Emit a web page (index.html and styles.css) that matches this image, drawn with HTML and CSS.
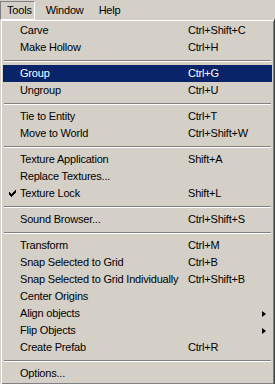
FILE: index.html
```html
<!DOCTYPE html>
<html lang="en">
<head>
    <meta charset="UTF-8">
    <title>Tools menu</title>
    <link rel="stylesheet" href="styles.css">
</head>
<body>
    <div class="menubar">
        <span class="top-item pressed">Tools</span>
        <span class="top-item">Window</span>
        <span class="top-item">Help</span>
    </div>

    <div class="menu">
        <div class="row"><span class="check"></span><span class="label">Carve</span><span class="key">Ctrl+Shift+C</span></div>
        <div class="row"><span class="check"></span><span class="label">Make Hollow</span><span class="key">Ctrl+H</span></div>
        <div class="sep"></div>
        <div class="row active"><span class="check"></span><span class="label">Group</span><span class="key">Ctrl+G</span></div>
        <div class="row"><span class="check"></span><span class="label">Ungroup</span><span class="key">Ctrl+U</span></div>
        <div class="sep"></div>
        <div class="row"><span class="check"></span><span class="label">Tie to Entity</span><span class="key">Ctrl+T</span></div>
        <div class="row"><span class="check"></span><span class="label">Move to World</span><span class="key">Ctrl+Shift+W</span></div>
        <div class="sep"></div>
        <div class="row"><span class="check"></span><span class="label">Texture Application</span><span class="key">Shift+A</span></div>
        <div class="row"><span class="check"></span><span class="label">Replace Textures...</span><span class="key"></span></div>
        <div class="row">
            <span class="check">
                <svg width="7" height="7" viewBox="0 0 7 7"><path d="M0 2h1v1h1v1h1v-1h1v-1h1v-1h1v-1h1v3h-1v1h-1v1h-1v1h-1v1h-1v-1h-1v-1h-1v-1h-1z" fill="#000"/></svg>
            </span><span class="label">Texture Lock</span><span class="key">Shift+L</span>
        </div>
        <div class="sep"></div>
        <div class="row"><span class="check"></span><span class="label">Sound Browser...</span><span class="key">Ctrl+Shift+S</span></div>
        <div class="sep"></div>
        <div class="row"><span class="check"></span><span class="label">Transform</span><span class="key">Ctrl+M</span></div>
        <div class="row"><span class="check"></span><span class="label">Snap Selected to Grid</span><span class="key">Ctrl+B</span></div>
        <div class="row"><span class="check"></span><span class="label">Snap Selected to Grid Individually</span><span class="key">Ctrl+Shift+B</span></div>
        <div class="row"><span class="check"></span><span class="label">Center Origins</span><span class="key"></span></div>
        <div class="row"><span class="check"></span><span class="label">Align objects</span><span class="key"></span><span class="arrow"></span></div>
        <div class="row"><span class="check"></span><span class="label">Flip Objects</span><span class="key"></span><span class="arrow"></span></div>
        <div class="row"><span class="check"></span><span class="label">Create Prefab</span><span class="key">Ctrl+R</span></div>
        <div class="sep"></div>
        <div class="row"><span class="check"></span><span class="label">Options...</span><span class="key"></span></div>
    </div>
</body>
</html>
```

FILE: styles.css
```css
body {
    margin: 0;
    background: #d4d0c8;
    font-family: "Liberation Sans", Arial, sans-serif;
    font-size: 11px;
    letter-spacing: -0.2px;
    color: #000;
    overflow: hidden;
}
.menubar {
    display: flex;
    height: 18px;
    padding-top: 1px;
}
.top-item {
    padding: 2px 6px 0 6px;
    line-height: 13px;
    height: 15px;
    border: 1px solid transparent;
    margin-right: 1px;
}
.top-item.pressed {
    border-color: #808080 #fff #fff #808080;
    padding: 2px 2px 0 6px;
    margin-right: 4px;
}
.menu {
    width: 269px;
    padding: 1px;
    border: 1px solid;
    border-color: #d4d0c8 #404040 #404040 #d4d0c8;
    box-shadow: inset 1px 1px #fff, inset -1px -1px #808080;
    padding: 2px;
}
.row {
    display: flex;
    align-items: center;
    height: 17px;
    line-height: 17px;
    white-space: nowrap;
}
.row.active {
    background: #0a246a;
    color: #fff;
}
.check {
    width: 17px;
    height: 17px;
    display: flex;
    align-items: center;
    justify-content: center;
    padding-left: 2px;
    box-sizing: border-box;
}
.label {
    width: 168px;
}
.key {
    flex: 1;
}
.arrow {
    width: 0;
    height: 0;
    border-top: 3.5px solid transparent;
    border-bottom: 3.5px solid transparent;
    border-left: 4px solid #000;
    margin-right: 6px;
}
.sep {
    margin: 4px 1px 3px;
    border-top: 1px solid #808080;
    border-bottom: 1px solid #fff;
}
```
